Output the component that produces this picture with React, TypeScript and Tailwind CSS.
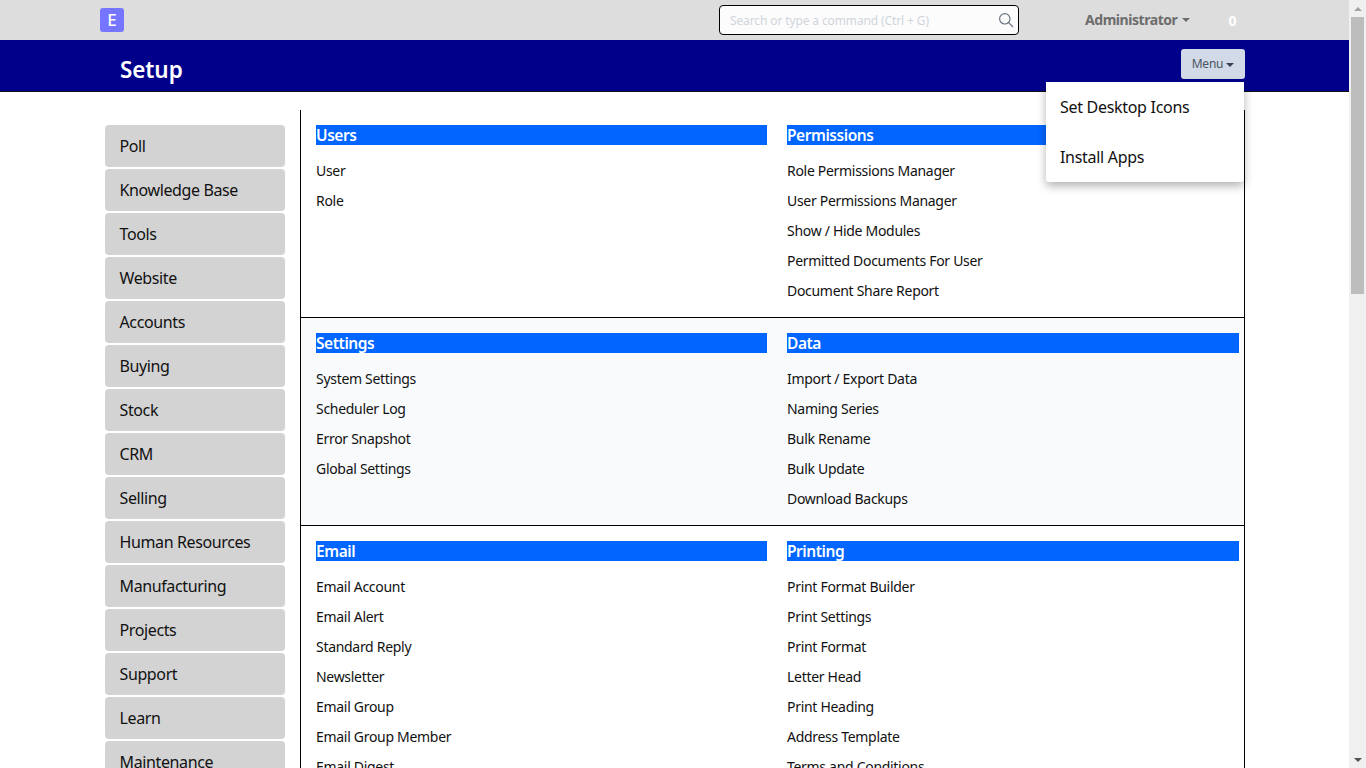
import React from "react";

const sidebar = ["Poll","Knowledge Base","Tools","Website","Accounts","Buying","Stock","CRM","Selling","Human Resources","Manufacturing","Projects","Support","Learn","Maintenance"];

const sections: { bg: string; last?: boolean; cols: { title: string; links: string[] }[] }[] = [
  { bg: "bg-white", cols: [
    { title: "Users", links: ["User","Role"] },
    { title: "Permissions", links: ["Role Permissions Manager","User Permissions Manager","Show / Hide Modules","Permitted Documents For User","Document Share Report"] },
  ]},
  { bg: "bg-[#f8fafc]", cols: [
    { title: "Settings", links: ["System Settings","Scheduler Log","Error Snapshot","Global Settings"] },
    { title: "Data", links: ["Import / Export Data","Naming Series","Bulk Rename","Bulk Update","Download Backups"] },
  ]},
  { bg: "bg-white", last: true, cols: [
    { title: "Email", links: ["Email Account","Email Alert","Standard Reply","Newsletter","Email Group","Email Group Member","Email Digest"] },
    { title: "Printing", links: ["Print Format Builder","Print Settings","Print Format","Letter Head","Print Heading","Address Template","Terms and Conditions"] },
  ]},
];

export default function App() {
  return (
    <div className="relative flex h-[768px] w-[1366px] overflow-hidden bg-white text-[14px] text-[#111] font-['Noto_Sans','Open_Sans',sans-serif]">
      <div className="relative w-[1349px] shrink-0">
        <header className="flex h-10 items-center bg-[#dddddd] pl-[100px]">
          <div className="flex h-6 w-6 items-center justify-center rounded-[3px] bg-[#7575ff] text-[17px] font-medium text-white">E</div>
          <div className="ml-[595px] flex h-[30px] w-[300px] items-center justify-between rounded-[4px] border border-black bg-[#fcfcfd] pl-2.5 pr-[4px]">
            <span className="mt-[1px] text-[12px] tracking-[-0.12px] text-[#d1d5db]">Search or type a command (Ctrl + G)</span>
            <svg width="16" height="16" viewBox="0 0 16 16" fill="none" stroke="#6b7280" strokeWidth="1.2"><circle cx="6.8" cy="6.8" r="5.2"/><path d="M10.6 10.6 15 15"/></svg>
          </div>
          <div className="ml-[66px] mt-[-1px] flex items-center gap-[5px] font-bold tracking-[-0.45px] text-[#6c6c6c]">
            <span>Administrator</span>
            <span className="mt-[1px] h-0 w-0 border-x-[4px] border-t-[4px] border-x-transparent border-t-[#6c6c6c]"></span>
          </div>
          <span className="ml-[38px] text-[14px] font-bold text-white">0</span>
        </header>

        <div className="flex h-[52px] items-center justify-between border-b border-[#111] bg-[#00008b] pl-[120px] pr-[104px]">
          <h1 className="mt-[9px] text-[22.5px] font-semibold tracking-[-0.1px] text-white">Setup</h1>
          <button className="mt-[-3px] flex h-[30px] w-16 items-center justify-center gap-[3px] rounded-[3px] bg-[#d1dae6] text-[12px] tracking-[-0.2px] text-[#4b5563]">
            Menu
            <span className="mt-[1px] h-0 w-0 border-x-[4px] border-t-[4px] border-x-transparent border-t-[#374151]"></span>
          </button>
        </div>

        <div className="flex pl-[105px] pt-[18px]">
          <nav className="flex w-[180px] shrink-0 flex-col gap-0.5 pt-[15px]">
            {sidebar.map((s) => (
              <div key={s} className="flex h-[42px] shrink-0 items-center rounded-[4px] bg-[#d3d3d3] pl-[14.5px] text-[16px] tracking-[-0.38px] text-[#111]">{s}</div>
            ))}
          </nav>
          <main className="ml-[15px] w-[945px] shrink-0 border-x border-black">
            {sections.map((sec, i) => (
              <section key={i} className={`grid h-[208px] grid-cols-[451px_452px] gap-x-5 pl-[15px] pt-[15px] ${sec.last ? "" : "border-b border-black"} ${sec.bg}`}>
                {sec.cols.map((c) => (
                  <div key={c.title}>
                    <h2 className="mb-[11px] h-5 bg-[#0066ff] text-[15.5px] font-semibold leading-5 tracking-[-0.45px] text-white">{c.title}</h2>
                    {c.links.map((l) => (
                      <div key={l} className="h-[30px] leading-[30px] tracking-[-0.3px]">{l}</div>
                    ))}
                  </div>
                ))}
              </section>
            ))}
          </main>
        </div>

        <div className="absolute left-[1046px] top-[82px] w-[198px] rounded-b-[3px] bg-white text-[16px] tracking-[-0.3px] text-[#111] shadow-[0_4px_10px_rgba(0,0,0,0.3)]">
          <div className="flex h-[50px] items-center pl-[14px]">Set Desktop Icons</div>
          <div className="flex h-[50px] items-center pl-[14px]">Install Apps</div>
        </div>
      </div>

      <div className="flex w-[17px] shrink-0 flex-col items-center bg-[#f0f0f0]">
        <div className="flex h-[17px] w-full items-center justify-center">
          <span className="h-0 w-0 border-x-[4px] border-b-[4px] border-x-transparent border-b-[#a3a3a3]"></span>
        </div>
        <div className="h-[277px] w-[13px] bg-[#bdbdbd]"></div>
        <div className="flex-1"></div>
        <div className="flex h-[17px] w-full items-center justify-center">
          <span className="h-0 w-0 border-x-[4px] border-t-[4px] border-x-transparent border-t-[#505050]"></span>
        </div>
      </div>
    </div>
  );
}
